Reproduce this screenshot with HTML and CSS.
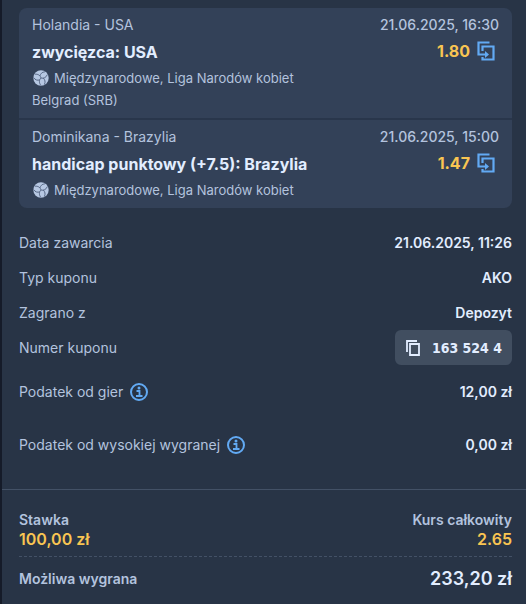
FILE: index.html
```html
<!DOCTYPE html>
<html lang="pl">
  <head>
    <title>Kupon</title>
    <meta charset="utf-8">
    <meta name="viewport" content="width=device-width, initial-scale=1">
    <link rel="stylesheet" href="styles.css">
  </head>
  <body>
    <svg class="defs" aria-hidden="true">
      <symbol id="ball" viewBox="0 0 16 16">
        <circle cx="8" cy="8" r="7.700" fill="#b6c7e2"/>
        <g fill="none" stroke="#4a5a78" stroke-width=".8">
          <path d="M8 8C7.500 5.500 5 3.700 1.800 4.200M7 5.900C7.500 3.700 9 2 12 1.800"/>
          <path d="M8 8C7.500 5.500 5 3.700 1.800 4.200M7 5.900C7.500 3.700 9 2 12 1.800" transform="rotate(120 8 8)"/>
          <path d="M8 8C7.500 5.500 5 3.700 1.800 4.200M7 5.900C7.500 3.700 9 2 12 1.800" transform="rotate(240 8 8)"/>
        </g>
      </symbol>
      <symbol id="swap" viewBox="0 0 18 20">
        <path d="M12.500 1.500H1.500v12H8M5.500 10V5.500h11v13h-11V16" fill="none" stroke="currentColor" stroke-width="2.200"/>
        <path d="M8 10l4 3.500L8 17z" fill="currentColor"/>
      </symbol>
      <symbol id="copy" viewBox="0 0 16 18">
        <path d="M2 13V2h10M5 5h9v11H5z" fill="none" stroke="currentColor" stroke-width="1.800"/>
      </symbol>
      <symbol id="info" viewBox="0 0 18 18">
        <circle cx="9" cy="9" r="8" fill="none" stroke="currentColor" stroke-width="2"/>
        <path d="M6.500 8H9.500v5M6 13h6.500" fill="none" stroke="currentColor" stroke-width="1.800"/>
        <circle cx="9" cy="5" r="1.500" fill="currentColor"/>
      </symbol>
    </svg>

    <main class="coupon">
      <section class="bets">
        <article class="bet">
          <div class="bet-line">
            <span>Holandia - USA</span>
            <time class="bet-date">21.06.2025, 16:30</time>
          </div>
          <div class="bet-line">
            <strong class="pick">zwycięzca: USA</strong>
            <span class="odds">1.80
              <button class="icon-button" type="button" aria-label="Dodaj do kuponu"><svg class="swap"><use href="#swap"/></svg></button>
            </span>
          </div>
          <div class="league"><svg class="ball"><use href="#ball"/></svg>Międzynarodowe, Liga Narodów kobiet</div>
          <div class="league">Belgrad (SRB)</div>
        </article>
        <article class="bet">
          <div class="bet-line">
            <span>Dominikana - Brazylia</span>
            <time class="bet-date">21.06.2025, 15:00</time>
          </div>
          <div class="bet-line">
            <strong class="pick">handicap punktowy (+7.5): Brazylia</strong>
            <span class="odds">1.47
              <button class="icon-button" type="button" aria-label="Dodaj do kuponu"><svg class="swap"><use href="#swap"/></svg></button>
            </span>
          </div>
          <div class="league"><svg class="ball"><use href="#ball"/></svg>Międzynarodowe, Liga Narodów kobiet</div>
        </article>
      </section>

      <dl class="details">
        <div class="row"><dt>Data zawarcia</dt><dd>21.06.2025, 11:26</dd></div>
        <div class="row"><dt>Typ kuponu</dt><dd>AKO</dd></div>
        <div class="row"><dt>Zagrano z</dt><dd>Depozyt</dd></div>
        <div class="row">
          <dt>Numer kuponu</dt>
          <dd><button class="copy-button" type="button"><svg class="copy"><use href="#copy"/></svg>163 524 4</button></dd>
        </div>
        <div class="row tax">
          <dt>Podatek od gier <button class="icon-button" type="button" aria-label="Informacja"><svg class="info"><use href="#info"/></svg></button></dt>
          <dd>12,00 zł</dd>
        </div>
        <div class="row tax">
          <dt>Podatek od wysokiej wygranej <button class="icon-button" type="button" aria-label="Informacja"><svg class="info"><use href="#info"/></svg></button></dt>
          <dd>0,00 zł</dd>
        </div>
      </dl>

      <footer class="summary">
        <div class="totals">
          <div>Stawka<div class="amount">100,00 zł</div></div>
          <div class="right">Kurs całkowity<div class="amount">2.65</div></div>
        </div>
        <div class="win">
          <span>Możliwa wygrana</span>
          <strong class="win-amount">233,20 zł</strong>
        </div>
      </footer>
    </main>
  </body>
</html>
```
FILE: styles.css
```css
* {
  box-sizing: border-box;
}

body {
  margin: 0;
  background: #283446;
  color: #b3c3de;
  font: 14px/20px Inter, sans-serif;
}

.defs {
  position: absolute;
  width: 0;
  height: 0;
}

svg {
  display: block;
  flex: none;
}

button {
  border: 0;
  padding: 0;
  background: none;
  color: inherit;
  font: inherit;
  cursor: pointer;
}

.coupon {
  min-height: 100vh;
  padding-top: 8px;
  border-left: 2px solid #151b29;
}

.bets {
  margin: 0 14px 0 17px;
  border-radius: 8px;
  background: #334158;
}

.bet {
  padding: 7px 13px;
}

.bet + .bet {
  border-top: 2px solid #29364b;
}

.bet-line {
  display: flex;
  justify-content: space-between;
  align-items: center;
}

.bet-date {
  font-weight: 500;
}

.pick {
  padding: 5px 0 3px;
  color: #e2edff;
  font-size: 16px;
  line-height: 24px;
  font-weight: 700;
}

.odds {
  display: flex;
  align-items: center;
  gap: 7px;
  padding-right: 4px;
  color: #f9c552;
  font-size: 16px;
  font-weight: 700;
}

.icon-button {
  color: #62aaf4;
}

.swap {
  width: 18px;
  height: 20px;
}

.league {
  display: flex;
  align-items: center;
  gap: 5px;
  font-size: 13px;
  line-height: 22px;
}

.ball {
  width: 16px;
  height: 16px;
  margin-left: 1px;
}

.details {
  margin: 0;
  padding: 17px 14px 18px 17px;
}

.row {
  display: flex;
  justify-content: space-between;
  align-items: center;
  min-height: 35px;
}

.row dt {
  display: flex;
  align-items: center;
  gap: 7px;
}

.row dd {
  margin: 0;
  color: #e2edff;
  font-weight: 600;
}

.tax {
  min-height: 53px;
}

.info {
  width: 18px;
  height: 18px;
}

.copy-button {
  display: flex;
  align-items: center;
  gap: 11px;
  height: 35px;
  padding: 0 10px;
  border-radius: 6px;
  background: #414e60;
  font-family: "DejaVu Sans Condensed", "DejaVu Sans", sans-serif;
  font-weight: 700;
}

.copy {
  width: 16px;
  height: 18px;
}

.summary {
  padding: 20px 14px 10px 17px;
  border-top: 1px solid #435166;
  font-weight: 600;
}

.totals {
  display: flex;
  justify-content: space-between;
  padding-bottom: 8px;
  border-bottom: 1px dashed #435166;
}

.right {
  text-align: right;
}

.amount {
  color: #f9c552;
  font-size: 16px;
  line-height: 18px;
}

.win {
  display: flex;
  justify-content: space-between;
  align-items: center;
  padding-top: 9px;
}

.win-amount {
  color: #e2edff;
  font-size: 18px;
  line-height: 26px;
  font-weight: 600;
}
```
